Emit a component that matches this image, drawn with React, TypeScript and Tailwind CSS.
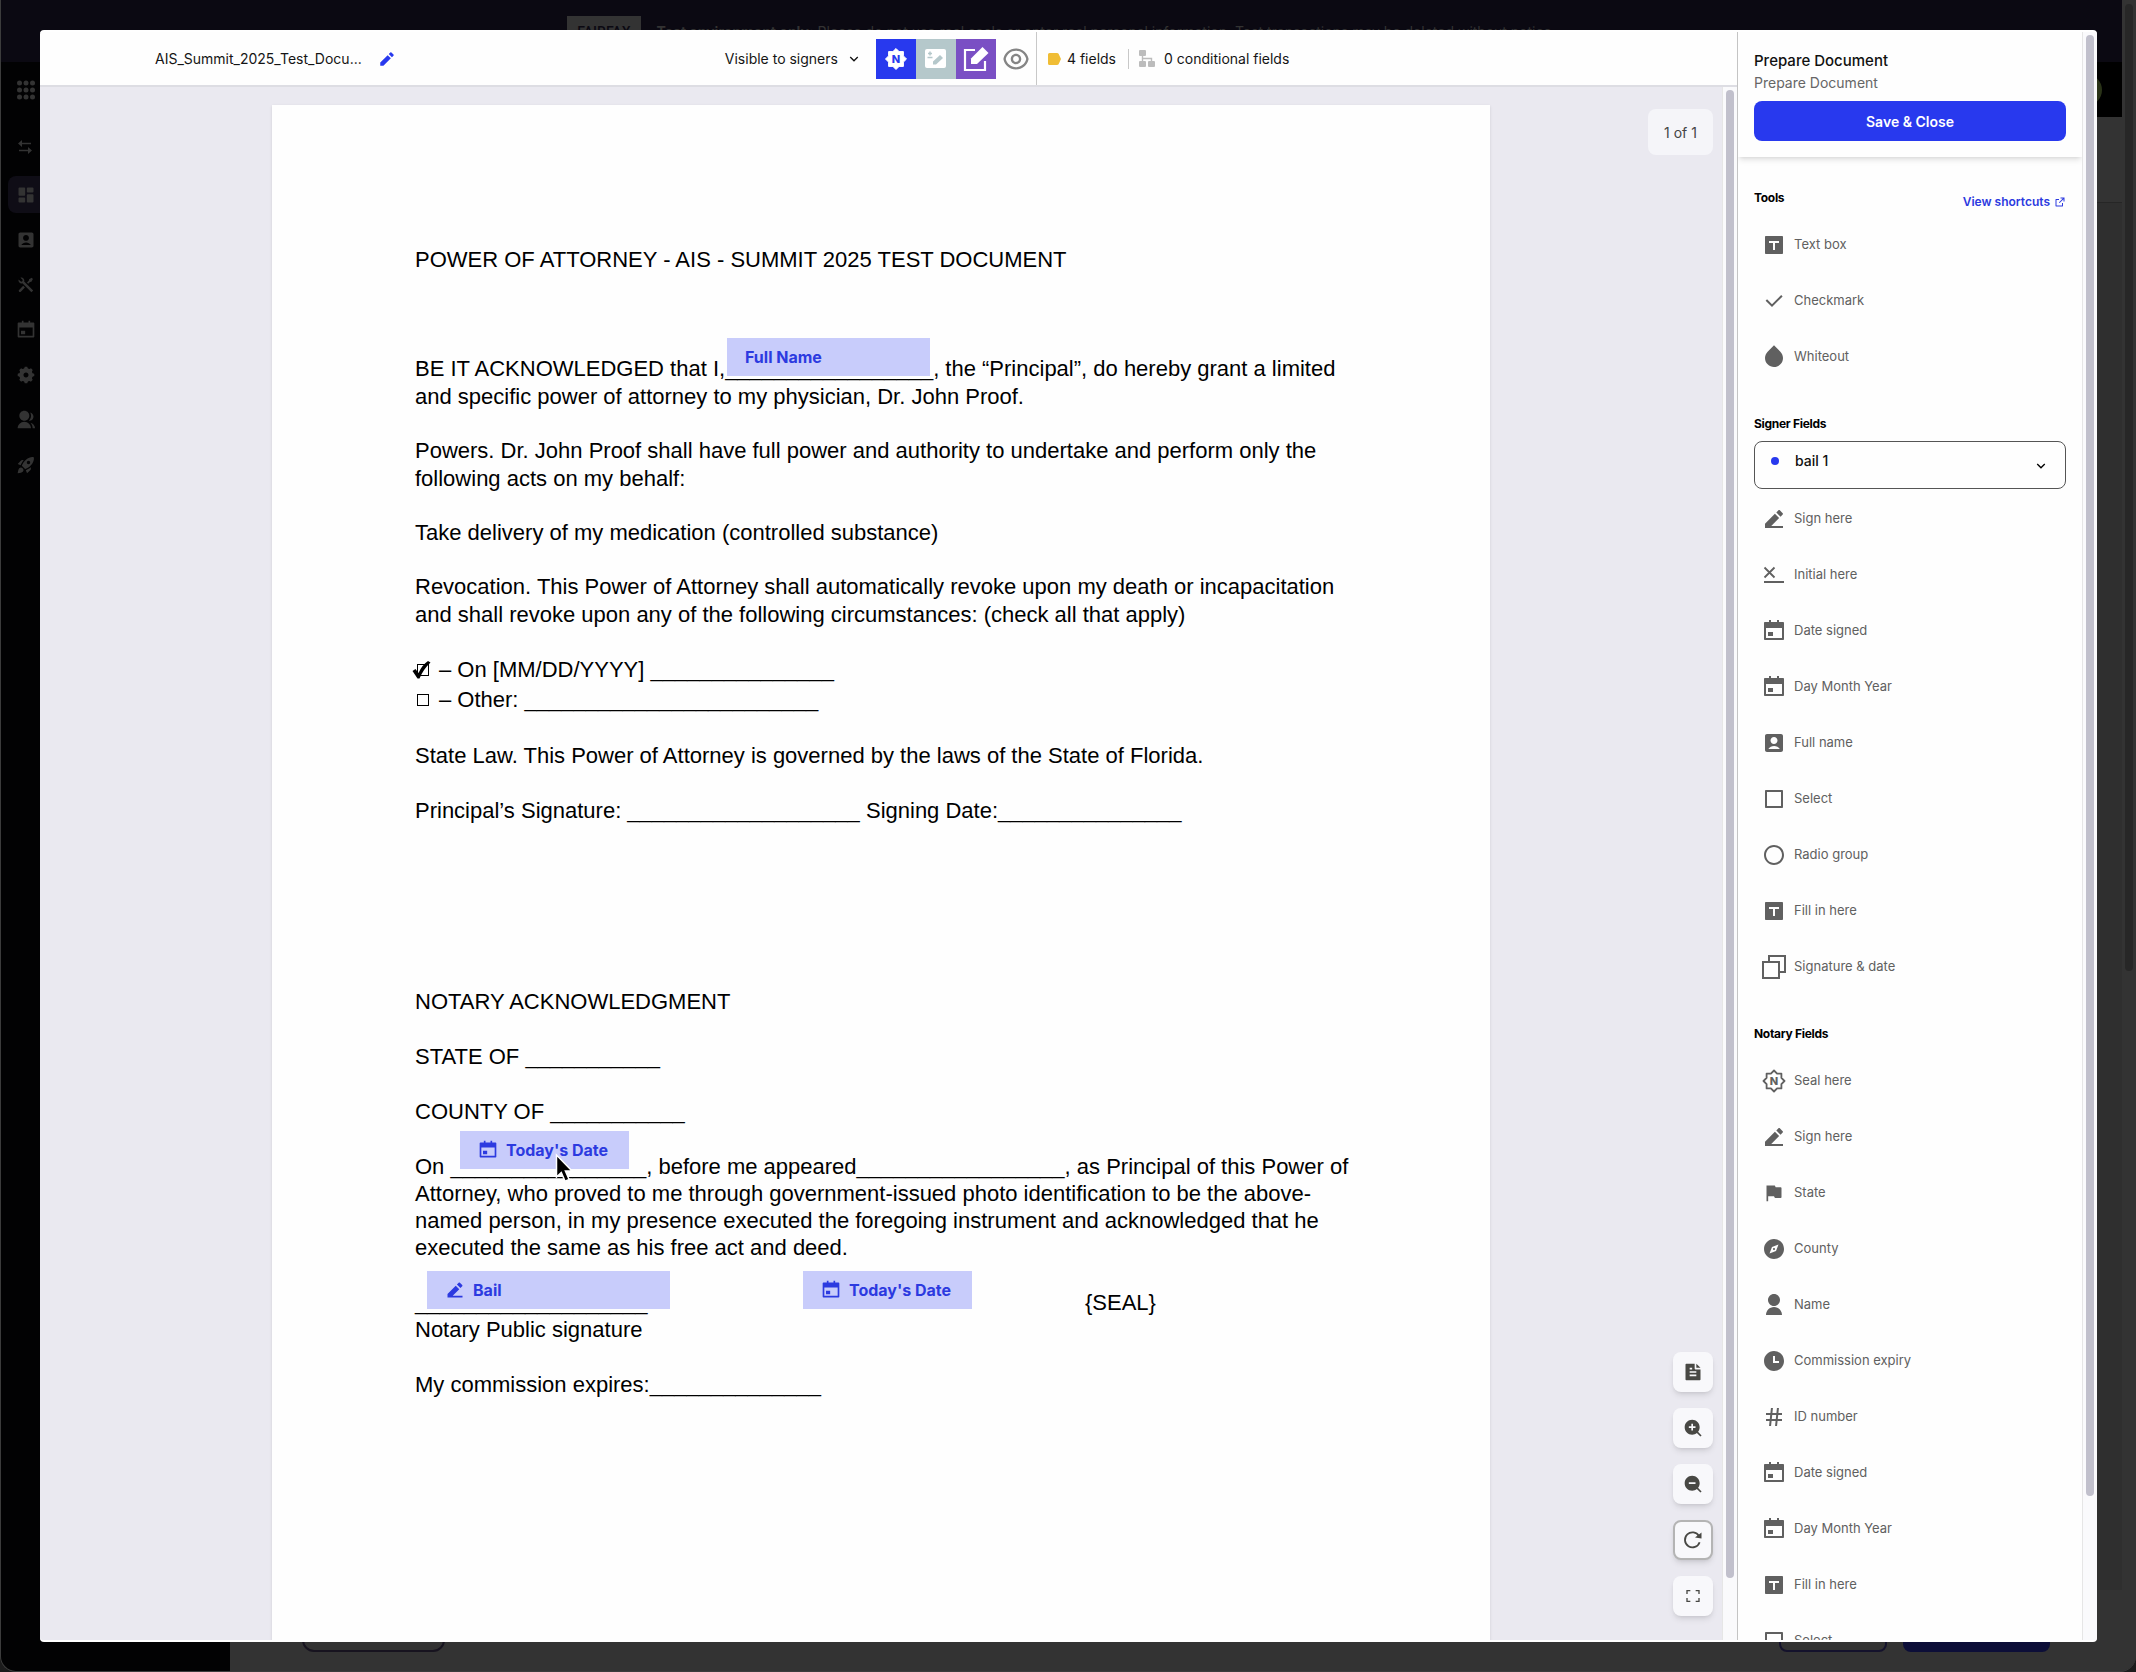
import type { ReactNode } from 'react'
import { MdRocketLaunch } from 'react-icons/md'
import {
  RiAccountBoxFill,
  RiArrowDownSLine,
  RiCalendarEventFill,
  RiCheckboxBlankCircleLine,
  RiCheckboxBlankLine,
  RiCheckLine,
  RiCompass3Fill,
  RiDashboardFill,
  RiDropFill,
  RiEdit2Fill,
  RiExternalLinkLine,
  RiEyeLine,
  RiFileTextFill,
  RiFlagFill,
  RiFullscreenLine,
  RiGroupFill,
  RiHashtag,
  RiPencilFill,
  RiSettings5Fill,
  RiTBoxFill,
  RiTimeFill,
  RiToolsFill,
  RiUserFill,
  RiZoomInFill,
  RiZoomOutFill,
} from 'react-icons/ri'

const SEAL_POINTS =
  '12,1.5 15.1,4.6 19.4,4.6 19.4,8.9 22.5,12 19.4,15.1 19.4,19.4 15.1,19.4 12,22.5 8.9,19.4 4.6,19.4 4.6,15.1 1.5,12 4.6,8.9 4.6,4.6 8.9,4.6'

function SealIcon({ solid = false }: { solid?: boolean }) {
  return (
    <svg width="24" height="24" viewBox="0 0 24 24" aria-hidden="true">
      <polygon
        points={SEAL_POINTS}
        fill={solid ? '#fff' : 'none'}
        stroke={solid ? '#fff' : 'currentColor'}
        strokeWidth={solid ? 1 : 1.8}
        strokeLinejoin="round"
      />
      <text
        x="12"
        y="16"
        textAnchor="middle"
        className="font-['Inter',sans-serif] text-[11px] font-extrabold"
        fill={solid ? '#2839ee' : 'currentColor'}
      >
        N
      </text>
    </svg>
  )
}

function InitialIcon() {
  return (
    <svg width="24" height="24" viewBox="0 0 24 24" fill="none" stroke="currentColor" strokeWidth="1.8" aria-hidden="true">
      <path d="M2.5 4.5l10 10M12.5 4.5l-10 10M2 19h20" />
    </svg>
  )
}

function CopiesIcon() {
  return (
    <svg width="24" height="24" viewBox="0 0 24 24" fill="none" stroke="currentColor" strokeWidth="2" aria-hidden="true">
      <path d="M1 7h16v16H1zM7 7V1h16v16h-6" />
    </svg>
  )
}

function RotateIcon() {
  return (
    <svg width="20" height="20" viewBox="0 0 20 20" aria-hidden="true">
      <path d="M16.6 12.2A7.5 7.5 0 1 1 16 6.2" fill="none" stroke="currentColor" strokeWidth="1.8" />
      <path d="M12 7.5L18.5 2.5V8.5z" fill="currentColor" />
    </svg>
  )
}

function DotGridIcon() {
  return (
    <svg width="18" height="20" viewBox="0 0 18 20" fill="currentColor" aria-hidden="true">
      {[3, 10, 17].map((y) => [2.5, 9, 15.5].map((x) => <circle key={`${x}-${y}`} cx={x} cy={y} r="2.5" />))}
    </svg>
  )
}

function TransferIcon() {
  return (
    <svg width="14" height="16" viewBox="0 0 14 16" aria-hidden="true">
      <path d="M2 4.5h11M1 11.5h11" fill="none" stroke="currentColor" strokeWidth="1.6" />
      <path d="M4 1v7L0 4.5zM10 8v7l4-3.5z" fill="currentColor" />
    </svg>
  )
}

function FormPenIcon() {
  return (
    <svg width="22" height="19" viewBox="0 0 22 19" aria-hidden="true">
      <rect x="0" y="0" width="21" height="19" rx="2" fill="#fff" />
      <path d="M2.5 8.5h5M5 2.5v4M3 4.5h4" stroke="#b5c8cb" strokeWidth="1.5" fill="none" />
      <path d="M8 15.5v-3l7-6.5 3 3-7 6.5z" fill="#b5c8cb" />
    </svg>
  )
}

function ComposeIcon() {
  return (
    <svg width="26" height="26" viewBox="0 0 26 26" aria-hidden="true">
      <path d="M12 4H2v20h20V15" fill="none" stroke="#fff" strokeWidth="2.2" />
      <path d="M8 18v-5.5L19.5 1l6 6L14 18z" fill="#fff" />
    </svg>
  )
}

function BranchIcon() {
  return (
    <svg width="16" height="18" viewBox="0 0 16 18" aria-hidden="true">
      <g fill="#bcbcbc">
        <rect x="0" y="0" width="7" height="6" rx="1" />
        <rect x="0" y="11" width="7" height="6" rx="1" />
        <rect x="9" y="11" width="7" height="6" rx="1" />
      </g>
      <path d="M3.5 6v5M3.5 8.5h9V11" fill="none" stroke="#bcbcbc" strokeWidth="1.4" />
    </svg>
  )
}

type Item = { label: string; icon: ReactNode }

const tools: Item[] = [
  { label: 'Text box', icon: <RiTBoxFill size={24} /> },
  { label: 'Checkmark', icon: <RiCheckLine size={24} /> },
  { label: 'Whiteout', icon: <RiDropFill size={24} /> },
]

const signerFields: Item[] = [
  { label: 'Sign here', icon: <RiEdit2Fill size={24} /> },
  { label: 'Initial here', icon: <InitialIcon /> },
  { label: 'Date signed', icon: <RiCalendarEventFill size={24} /> },
  { label: 'Day Month Year', icon: <RiCalendarEventFill size={24} /> },
  { label: 'Full name', icon: <RiAccountBoxFill size={24} /> },
  { label: 'Select', icon: <RiCheckboxBlankLine size={24} /> },
  { label: 'Radio group', icon: <RiCheckboxBlankCircleLine size={24} /> },
  { label: 'Fill in here', icon: <RiTBoxFill size={24} /> },
  { label: 'Signature & date', icon: <CopiesIcon /> },
]

const notaryFields: Item[] = [
  { label: 'Seal here', icon: <SealIcon /> },
  { label: 'Sign here', icon: <RiEdit2Fill size={24} /> },
  { label: 'State', icon: <RiFlagFill size={20} /> },
  { label: 'County', icon: <RiCompass3Fill size={24} /> },
  { label: 'Name', icon: <RiUserFill size={24} /> },
  { label: 'Commission expiry', icon: <RiTimeFill size={24} /> },
  { label: 'ID number', icon: <RiHashtag size={24} /> },
  { label: 'Date signed', icon: <RiCalendarEventFill size={24} /> },
  { label: 'Day Month Year', icon: <RiCalendarEventFill size={24} /> },
  { label: 'Fill in here', icon: <RiTBoxFill size={24} /> },
  { label: 'Select', icon: <RiCheckboxBlankLine size={24} /> },
]

function FieldList({ items }: { items: Item[] }) {
  return (
    <ul>
      {items.map((item) => (
        <li key={item.label}>
          <button type="button" className="flex h-14 w-full items-center gap-2 px-2 text-[13px] text-[#606060]">
            <span className="flex w-6 justify-center">{item.icon}</span>
            {item.label}
          </button>
        </li>
      ))}
    </ul>
  )
}

const navItems: Item[] = [
  { label: 'Dashboard', icon: <RiDashboardFill size={20} /> },
  { label: 'Contacts', icon: <RiAccountBoxFill size={20} /> },
  { label: 'Tools', icon: <RiToolsFill size={20} /> },
  { label: 'Calendar', icon: <RiCalendarEventFill size={20} /> },
  { label: 'Settings', icon: <RiSettings5Fill size={20} /> },
  { label: 'Team', icon: <RiGroupFill size={20} /> },
  { label: 'Launch', icon: <MdRocketLaunch size={20} /> },
]

// Dimmed dashboard that stays visible around the editor
function Backdrop() {
  return (
    <div className="flex h-full overflow-hidden rounded-b-2xl border-b border-l border-[#3c3c3c] bg-[#2f2f2f]">
      <div className="flex min-w-0 grow flex-col">
        <div className="flex h-[62px] shrink-0 items-start justify-center gap-4 bg-[#0b0912] pt-4 text-[14px] leading-8 text-[#333]">
          <span className="bg-[#333] px-[10px] font-['Roboto',sans-serif] font-medium text-[#0b0912]">FAIRFAX</span>
          <p>
            <strong>Test environment only:</strong> Please do not use real seals or enter real personal information. Test
            transactions may be deleted without notice.
          </p>
        </div>
        <div className="flex min-h-0 grow">
          <nav className="flex w-[229px] shrink-0 flex-col bg-[#020203] pl-[7px] text-[#333]">
            <div className="flex h-14 items-center pl-[9px]">
              <DotGridIcon />
            </div>
            <div className="flex h-[58px] items-center pl-[10px]">
              <TransferIcon />
            </div>
            <ul className="flex flex-col gap-2">
              {navItems.map((item, i) => (
                <li
                  key={item.label}
                  className={
                    i === 0
                      ? 'flex h-[37px] items-center rounded-lg bg-[#0f0d16] pl-2'
                      : 'flex h-[37px] items-center rounded-lg pl-2'
                  }
                >
                  {item.icon}
                </li>
              ))}
            </ul>
          </nav>
          <div className="flex grow flex-col">
            <div className="flex h-[55px] items-center justify-end bg-black pr-5">
              <div className="size-8 rounded-full bg-[#2a3318]" />
            </div>
            <div className="h-[86px] border-b border-[#262626] bg-[#333]" />
            <div className="grow" />
            <div className="flex h-[81px] items-start gap-4 bg-[#333] px-[72px] pt-[18px]">
              <div className="mr-auto h-11 w-[143px] rounded-xl border-2 border-[#17131f]" />
              <div className="h-11 w-[108px] rounded-lg border-2 border-[#14122c]" />
              <div className="h-11 w-[147px] rounded-lg bg-[#0c0e38]" />
            </div>
          </div>
        </div>
      </div>
      <div className="w-[14px] shrink-0 bg-[#333] px-[3px] pt-1">
        <div className="h-[58%] rounded-full bg-[#272727]" />
      </div>
    </div>
  )
}

function Toolbar() {
  return (
    <header className="flex h-[55px] shrink-0 items-center border-b-2 border-[#dddde3] text-[14px] text-[#151515]">
      <div className="flex w-2/5 items-center gap-4 pl-[115px]">
        <h1>AIS_Summit_2025_Test_Docu...</h1>
        <button type="button" aria-label="Rename document" className="text-[#2839ee]">
          <RiPencilFill size={18} />
        </button>
      </div>
      <button type="button" className="ml-[6px] flex items-center gap-2">
        Visible to signers
        <RiArrowDownSLine size={16} />
      </button>
      <div className="ml-[14px] flex">
        <button type="button" aria-label="Notary" className="flex size-10 items-center justify-center bg-[#2839ee]">
          <SealIcon solid />
        </button>
        <button type="button" aria-label="Witness" className="flex size-10 items-center justify-center bg-[#b5c8cb]">
          <FormPenIcon />
        </button>
        <button type="button" aria-label="Signer" className="flex size-10 items-center justify-center bg-[#7a4fc4]">
          <ComposeIcon />
        </button>
      </div>
      <button type="button" aria-label="Preview" className="flex w-10 justify-center text-[#858585]">
        <RiEyeLine size={28} />
      </button>
      <div className="flex h-full items-center border-l border-[#c8c8c8] pl-[11px]">
        <svg width="13" height="12" viewBox="0 0 13 12" aria-hidden="true">
          <path
            d="M1.5 0H9a2 2 0 0 1 1.6.8L13 6l-2.4 5.2A2 2 0 0 1 9 12H1.5A1.5 1.5 0 0 1 0 10.5v-9A1.5 1.5 0 0 1 1.5 0z"
            fill="#f0bd35"
          />
        </svg>
        <span className="ml-[6px] mr-3">4 fields</span>
        <span className="flex h-5 items-center gap-[9px] border-l border-[#c8c8c8] pl-[10px]">
          <BranchIcon />0 conditional fields
        </span>
      </div>
    </header>
  )
}

function PlacedField({ className, icon, children }: { className: string; icon?: ReactNode; children: ReactNode }) {
  return (
    <div
      className={`absolute flex h-[38px] items-center gap-2 bg-[#c8ccfb] px-[18px] font-['Inter',sans-serif] text-[16px] font-bold text-[#2c3ae0] ${className}`}
    >
      {icon}
      {children}
    </div>
  )
}

function Paper() {
  return (
    <article className="relative mx-auto h-[1560px] w-[1218px] bg-[#fefefe] pl-[143px] pr-[110px] pt-[141px] font-['Liberation_Sans',Arial,sans-serif] text-[22px] leading-7 text-black shadow-sm">
      <h2>POWER OF ATTORNEY - AIS - SUMMIT 2025 TEST DOCUMENT</h2>

      <div className="mt-[81px] flex flex-col gap-[26px]">
        <p>
          BE IT ACKNOWLEDGED that I,_________________, the “Principal”, do hereby grant a limited
          <br />
          and specific power of attorney to my physician, Dr. John Proof.
        </p>
        <p>
          Powers. Dr. John Proof shall have full power and authority to undertake and perform only the
          <br />
          following acts on my behalf:
        </p>
        <p>Take delivery of my medication (controlled substance)</p>
        <p>
          Revocation. This Power of Attorney shall automatically revoke upon my death or incapacitation
          <br />
          and shall revoke upon any of the following circumstances: (check all that apply)
        </p>
        <div className="flex flex-col leading-[30px]">
          <label className="relative flex items-center pl-[2px]">
            <input type="checkbox" defaultChecked className="mr-[10px] size-3 appearance-none border border-black" />
            <svg className="absolute -left-1" width="20" height="20" viewBox="0 0 20 20" aria-hidden="true">
              <path d="M1.5 11l3-2L7.5 13Q11 5 17 1L19.5 2.5Q12.5 9 8.5 18.5H6.5z" fill="#000" />
            </svg>
            – On [MM/DD/YYYY] _______________
          </label>
          <label className="flex items-center pl-[2px]">
            <input type="checkbox" className="mr-[10px] size-3 appearance-none border border-black" />
            – Other: ________________________
          </label>
        </div>
      </div>

      <div className="mt-[27px] flex flex-col gap-[27px]">
        <p>State Law. This Power of Attorney is governed by the laws of the State of Florida.</p>
        <p>Principal’s Signature: ___________________ Signing Date:_______________</p>
      </div>

      <div className="mt-[163px] flex flex-col gap-7 leading-[27px]">
        <h3>NOTARY ACKNOWLEDGMENT</h3>
        <p>STATE OF ___________</p>
        <p>COUNTY OF ___________</p>
        <p>
          On ________________, before me appeared_________________, as Principal of this Power of
          <br />
          Attorney, who proved to me through government-issued photo identification to be the above-
          <br />
          named person, in my presence executed the foregoing instrument and acknowledged that he
          <br />
          executed the same as his free act and deed.
        </p>
        <div>
          <p className="flex">
            <span className="w-[670px]">___________________</span>
            {'{SEAL}'}
          </p>
          <p>Notary Public signature</p>
        </div>
        <p>My commission expires:______________</p>
      </div>

      <PlacedField className="left-[455px] top-[233px] w-[203px]">Full Name</PlacedField>
      <PlacedField className="left-[188px] top-[1026px] w-[169px]" icon={<RiCalendarEventFill size={20} />}>
        Today's Date
      </PlacedField>
      <PlacedField className="left-[155px] top-[1166px] w-[243px]" icon={<RiEdit2Fill size={20} />}>
        Bail
      </PlacedField>
      <PlacedField className="left-[531px] top-[1166px] w-[169px]" icon={<RiCalendarEventFill size={20} />}>
        Today's Date
      </PlacedField>

      <svg className="absolute left-[283px] top-[1048px]" width="20" height="31" viewBox="0 0 20 31" aria-hidden="true">
        <path d="M1.5 2v22l4.8-4.5 3.8 8.7 4-1.8-3.7-8.4h6.6z" fill="#000" stroke="#fff" strokeWidth="1.5" />
      </svg>
    </article>
  )
}

const viewButtons: Item[] = [
  { label: 'Pages', icon: <RiFileTextFill size={20} /> },
  { label: 'Zoom in', icon: <RiZoomInFill size={20} /> },
  { label: 'Zoom out', icon: <RiZoomOutFill size={20} /> },
  { label: 'Rotate', icon: <RotateIcon /> },
  { label: 'Full screen', icon: <RiFullscreenLine size={16} /> },
]

function Scrollbar({ children }: { children: ReactNode }) {
  return <div className="w-[15px] shrink-0 border-l border-[#e6e6e6] bg-[#fafafc] px-[3px] pt-[3px]">{children}</div>
}

function Viewer() {
  return (
    <div className="flex min-h-0 grow">
      <main className="relative min-w-0 grow overflow-hidden bg-[#eae9f0] pt-[18px]">
        <Paper />
        <div className="absolute right-[9px] top-[22px] flex h-[46px] w-[65px] items-center justify-center rounded-lg bg-[#f5f5f9] text-[14px] text-[#444]">
          1 of 1
        </div>
        <div className="absolute bottom-6 right-[9px] flex flex-col gap-4 text-[#484844]">
          {viewButtons.map((button) => (
            <button
              key={button.label}
              type="button"
              aria-label={button.label}
              className={
                button.label === 'Rotate'
                  ? 'flex size-10 items-center justify-center rounded-lg border-2 border-[#b4b4b4] bg-[#f8f8fb] shadow-md'
                  : 'flex size-10 items-center justify-center rounded-lg bg-[#f8f8fb] shadow-md'
              }
            >
              {button.icon}
            </button>
          ))}
        </div>
      </main>
      <Scrollbar>
        <div className="h-[96%] rounded-full bg-[#c1c0cc]" />
      </Scrollbar>
    </div>
  )
}

function SidePanel() {
  return (
    <aside className="flex w-[360px] shrink-0 border-l border-[#c4c4c4]">
      <div className="min-w-0 grow overflow-hidden">
        <div className="px-4 pb-4 pt-[17px] shadow-md">
          <h2 className="text-[15px] font-medium leading-6 text-[#111]">Prepare Document</h2>
          <p className="text-[14px] leading-5 text-[#666]">Prepare Document</p>
          <button type="button" className="mt-2 h-10 w-full rounded-lg bg-[#2839ee] text-[14px] font-semibold text-white">
            Save &amp; Close
          </button>
        </div>
        <div className="px-4">
          <div className="flex h-[60px] items-start justify-between pt-8 text-[12px]">
            <h3 className="font-bold leading-[18px] tracking-tight text-black">Tools</h3>
            <a href="#shortcuts" className="flex items-center gap-1 pt-1 font-semibold leading-[18px] text-[#2c3ae0]">
              View shortcuts
              <RiExternalLinkLine size={12} />
            </a>
          </div>
          <FieldList items={tools} />
          <h3 className="mt-[30px] text-[12px] font-bold leading-[18px] tracking-tight text-black">Signer Fields</h3>
          <div className="relative mb-[2px] mt-2 flex h-12 items-center rounded-lg border border-[#555]">
            <span className="absolute left-4 top-[15px] size-2 rounded-full bg-[#2839ee]" />
            <select
              aria-label="Signer"
              className="h-full w-full appearance-none bg-transparent pb-[10px] pl-10 text-[14px] font-medium text-[#111]"
            >
              <option>bail 1</option>
            </select>
            <RiArrowDownSLine size={16} className="pointer-events-none absolute right-4 top-4" />
          </div>
          <FieldList items={signerFields} />
          <h3 className="mt-[30px] text-[12px] font-bold leading-[18px] tracking-tight text-black">Notary Fields</h3>
          <div className="mt-[10px]">
            <FieldList items={notaryFields} />
          </div>
        </div>
      </div>
      <Scrollbar>
        <div className="h-[91%] rounded-full bg-[#c1c0cc]" />
      </Scrollbar>
    </aside>
  )
}

export default function App() {
  return (
    <div className="relative h-screen overflow-hidden bg-[#1c1c1c] font-['Inter',sans-serif]">
      <Backdrop />
      <div className="absolute inset-0 flex py-[30px] pl-10 pr-[39px]">
        <div
          role="dialog"
          aria-label="Prepare Document"
          className="flex grow overflow-hidden rounded-[4px] border-y-2 border-white bg-[#fefefe]"
        >
          <div className="flex min-w-0 grow flex-col">
            <Toolbar />
            <Viewer />
          </div>
          <SidePanel />
        </div>
      </div>
    </div>
  )
}
